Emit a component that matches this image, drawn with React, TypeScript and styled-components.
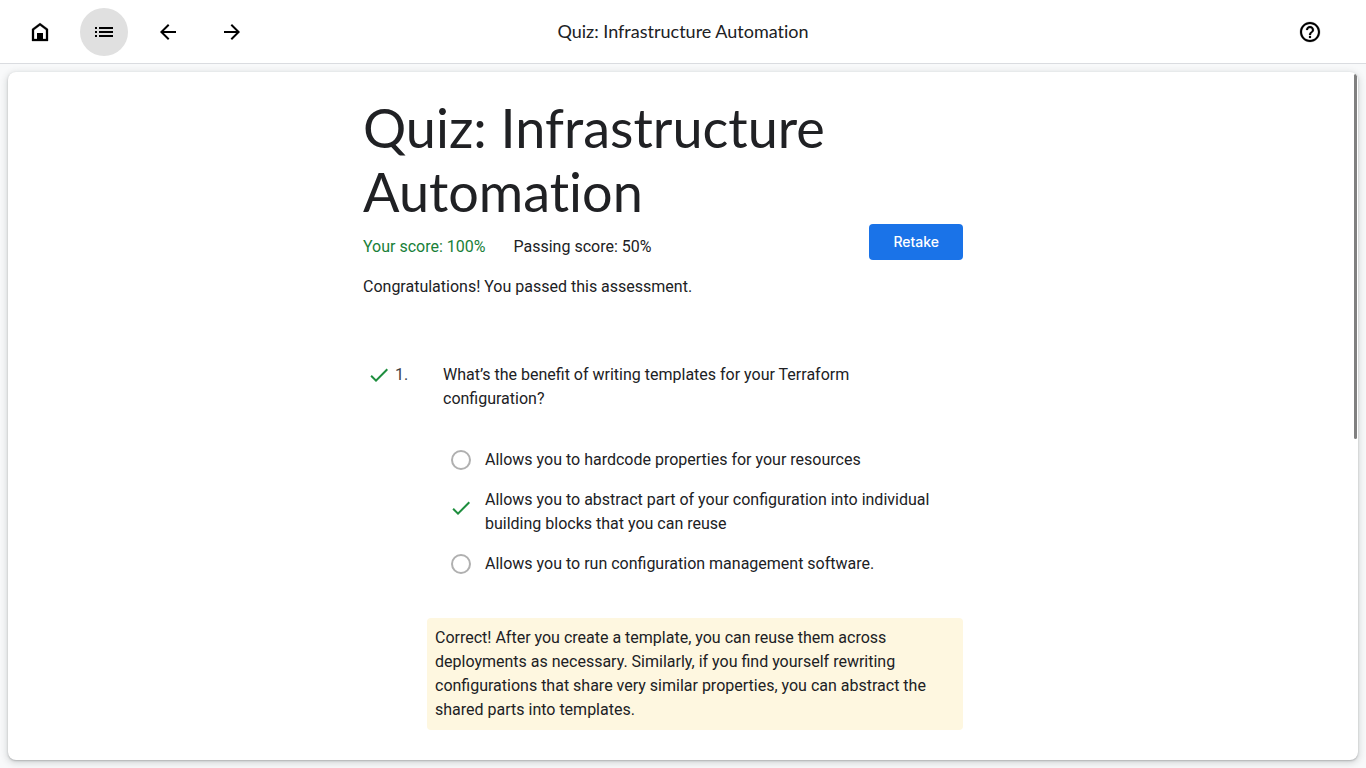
import React from "react";
import styled, { createGlobalStyle } from "styled-components";

const GlobalStyle = createGlobalStyle`
  *, *::before, *::after { box-sizing: border-box; }
  html, body, #root { height: 100%; }
  body {
    margin: 0;
    background: #f8f9fa;
    color: #202124;
    font: 400 16px/24px Roboto, sans-serif;
  }
`;

const Page = styled.div`
  display: flex;
  flex-direction: column;
  height: 100%;
`;

const Toolbar = styled.header`
  display: grid;
  grid-template-columns: 1fr auto 1fr;
  align-items: center;
  height: 64px;
  flex: none;
  padding: 0 16px;
  background: #fff;
  border-bottom: 1px solid #dadce0;
`;

const ToolGroup = styled.nav<{ $end?: boolean }>`
  display: flex;
  gap: 16px;
  justify-content: ${(p) => (p.$end ? "flex-end" : "flex-start")};
  padding-right: 16px;
`;

const IconButton = styled.button<{ $active?: boolean }>`
  display: grid;
  place-items: center;
  width: 48px;
  height: 48px;
  padding: 0;
  border: 0;
  border-radius: 50%;
  color: #000;
  background: ${(p) => (p.$active ? "#e0e0e0" : "transparent")};
  cursor: pointer;
`;

const ToolbarTitle = styled.div`
  padding-bottom: 2px;
  font: 400 18px/24px Lato, sans-serif;
  font-variant-ligatures: none;
`;

const Stage = styled.main`
  flex: 1;
  min-height: 0;
  padding: 8px;
`;

const Card = styled.section`
  position: relative;
  height: 100%;
  overflow: hidden;
  background: #fff;
  border-radius: 8px;
  box-shadow: 0 1px 2px rgba(60, 64, 67, 0.3), 0 2px 6px 2px rgba(60, 64, 67, 0.15);
`;

const ScrollThumb = styled.div`
  position: absolute;
  top: 2px;
  right: 1px;
  width: 3px;
  height: 53%;
  border-radius: 2px;
  background: #808080;
`;

const Column = styled.div`
  max-width: 640px;
  margin: 0 auto;
  padding: 24px 40px 0 0;
`;

const Heading = styled.h1`
  margin: 0;
  font: 400 54px/64px Lato, sans-serif;
  font-variant-ligatures: none;
`;

const ScoreRow = styled.div`
  display: flex;
  align-items: flex-start;
  justify-content: space-between;
`;

const Scores = styled.div`
  display: flex;
  gap: 28px;
  padding-top: 11px;
`;

const Score = styled.span<{ $passed?: boolean }>`
  color: ${(p) => (p.$passed ? "#188038" : "inherit")};
`;

const RetakeButton = styled.button`
  height: 36px;
  padding: 0 24px;
  border: 0;
  border-radius: 4px;
  background: #1a73e8;
  color: #fff;
  font: 500 14px/20px Inter, sans-serif;
  cursor: pointer;
`;

const Message = styled.p`
  margin: 15px 0 64px;
`;

const Question = styled.fieldset`
  display: block;
  min-width: 0;
  margin: 0;
  padding: 0;
  border: 0;
`;

const Prompt = styled.legend`
  display: flex;
  width: 100%;
  padding: 0 64px 0 4px;
`;

const QuestionNumber = styled.span`
  flex: none;
  width: 48px;
  margin-left: 4px;
  color: #3c4043;
`;

const Options = styled.div`
  display: flex;
  flex-direction: column;
  gap: 16px;
  padding: 37px 0 0 86px;
`;

const Option = styled.label`
  display: flex;
  align-items: center;
  gap: 12px;
`;

const Mark = styled.span<{ $checked?: boolean }>`
  display: grid;
  place-items: center;
  flex: none;
  width: 24px;
  padding-bottom: ${(p) => (p.$checked ? "8px" : "0")};
`;

const Radio = styled.input`
  appearance: none;
  width: 20px;
  height: 20px;
  margin: 0;
  border: 2px solid #b0b0b0;
  border-radius: 50%;
`;

const HiddenRadio = styled.input`
  appearance: none;
  grid-area: 1 / 1;
  width: 20px;
  height: 20px;
  margin: 0;
`;

const CheckSvg = styled.svg`
  grid-area: 1 / 1;
  flex: none;
  fill: #1e8e3e;
`;

const Feedback = styled.p`
  margin: 42px 0 0 64px;
  padding: 8px;
  border-radius: 4px;
  background: #fef7e0;
`;

const Check = () => (
  <CheckSvg width="24" height="24" viewBox="0 0 24 24" aria-hidden="true">
    <path d="M9 16.17 4.83 12l-1.42 1.41L9 19 21 7l-1.41-1.41z" />
  </CheckSvg>
);

const icons = {
  home: (
    <>
      <path d="M12 3 4 9v12h16V9l-8-6zm6 16H6v-9l6-4.5 6 4.5v9z" stroke="currentColor" strokeWidth="0.3" />
      <path d="M9 13h6v7H9z" />
    </>
  ),
  list: (
    <path d="M3 13h2v-2H3v2zm0 4h2v-2H3v2zm0-8h2V7H3v2zm4 4h14v-2H7v2zm0 4h14v-2H7v2zM7 7v2h14V7H7z" />
  ),
  back: <path d="M20 11H7.83l5.59-5.59L12 4l-8 8 8 8 1.41-1.41L7.83 13H20v-2z" />,
  forward: <path d="m12 4-1.41 1.41L16.17 11H4v2h12.17l-5.58 5.59L12 20l8-8z" />,
  help: (
    <path
      stroke="currentColor"
      strokeWidth="0.2"
      d="M11 18h2v-2h-2v2zm1-16C6.48 2 2 6.48 2 12s4.48 10 10 10 10-4.48 10-10S17.52 2 12 2zm0 18c-4.41 0-8-3.59-8-8s3.59-8 8-8 8 3.59 8 8-3.59 8-8 8zm0-14c-2.21 0-4 1.79-4 4h2c0-1.1.9-2 2-2s2 .9 2 2c0 2-3 1.75-3 5h2c0-2.25 3-2.5 3-5 0-2.21-1.79-4-4-4z"
    />
  ),
};

function ToolButton({ icon, label, active }: { icon: keyof typeof icons; label: string; active?: boolean }) {
  return (
    <IconButton type="button" aria-label={label} $active={active}>
      <svg width="24" height="24" viewBox="0 0 24 24" fill="currentColor" aria-hidden="true">
        {icons[icon]}
      </svg>
    </IconButton>
  );
}

const options = [
  { text: "Allows you to hardcode properties for your resources" },
  {
    text: "Allows you to abstract part of your configuration into individual building blocks that you can reuse",
    correct: true,
  },
  { text: "Allows you to run configuration management software." },
];

export default function App() {
  return (
    <Page>
      <GlobalStyle />
      <Toolbar>
        <ToolGroup>
          <ToolButton icon="home" label="Home" />
          <ToolButton icon="list" label="Course outline" active />
          <ToolButton icon="back" label="Previous" />
          <ToolButton icon="forward" label="Next" />
        </ToolGroup>
        <ToolbarTitle>Quiz: Infrastructure Automation</ToolbarTitle>
        <ToolGroup $end>
          <ToolButton icon="help" label="Help" />
        </ToolGroup>
      </Toolbar>
      <Stage>
        <Card>
          <Column>
            <Heading>Quiz: Infrastructure Automation</Heading>
            <ScoreRow>
              <Scores>
                <Score $passed>Your score: 100%</Score>
                <Score>Passing score: 50%</Score>
              </Scores>
              <RetakeButton type="button">Retake</RetakeButton>
            </ScoreRow>
            <Message>Congratulations! You passed this assessment.</Message>
            <Question>
              <Prompt>
                <Check />
                <QuestionNumber>1.</QuestionNumber>
                <span>What’s the benefit of writing templates for your Terraform configuration?</span>
              </Prompt>
              <Options>
                {options.map((o) => (
                  <Option key={o.text}>
                    <Mark $checked={o.correct}>
                      {o.correct ? (
                        <>
                          <HiddenRadio type="radio" name="q1" defaultChecked />
                          <Check />
                        </>
                      ) : (
                        <Radio type="radio" name="q1" />
                      )}
                    </Mark>
                    <span>{o.text}</span>
                  </Option>
                ))}
              </Options>
            </Question>
            <Feedback>
              Correct! After you create a template, you can reuse them across deployments as necessary.
              Similarly, if you find yourself rewriting configurations that share very similar properties,
              you can abstract the shared parts into templates.
            </Feedback>
          </Column>
          <ScrollThumb />
        </Card>
      </Stage>
    </Page>
  );
}
